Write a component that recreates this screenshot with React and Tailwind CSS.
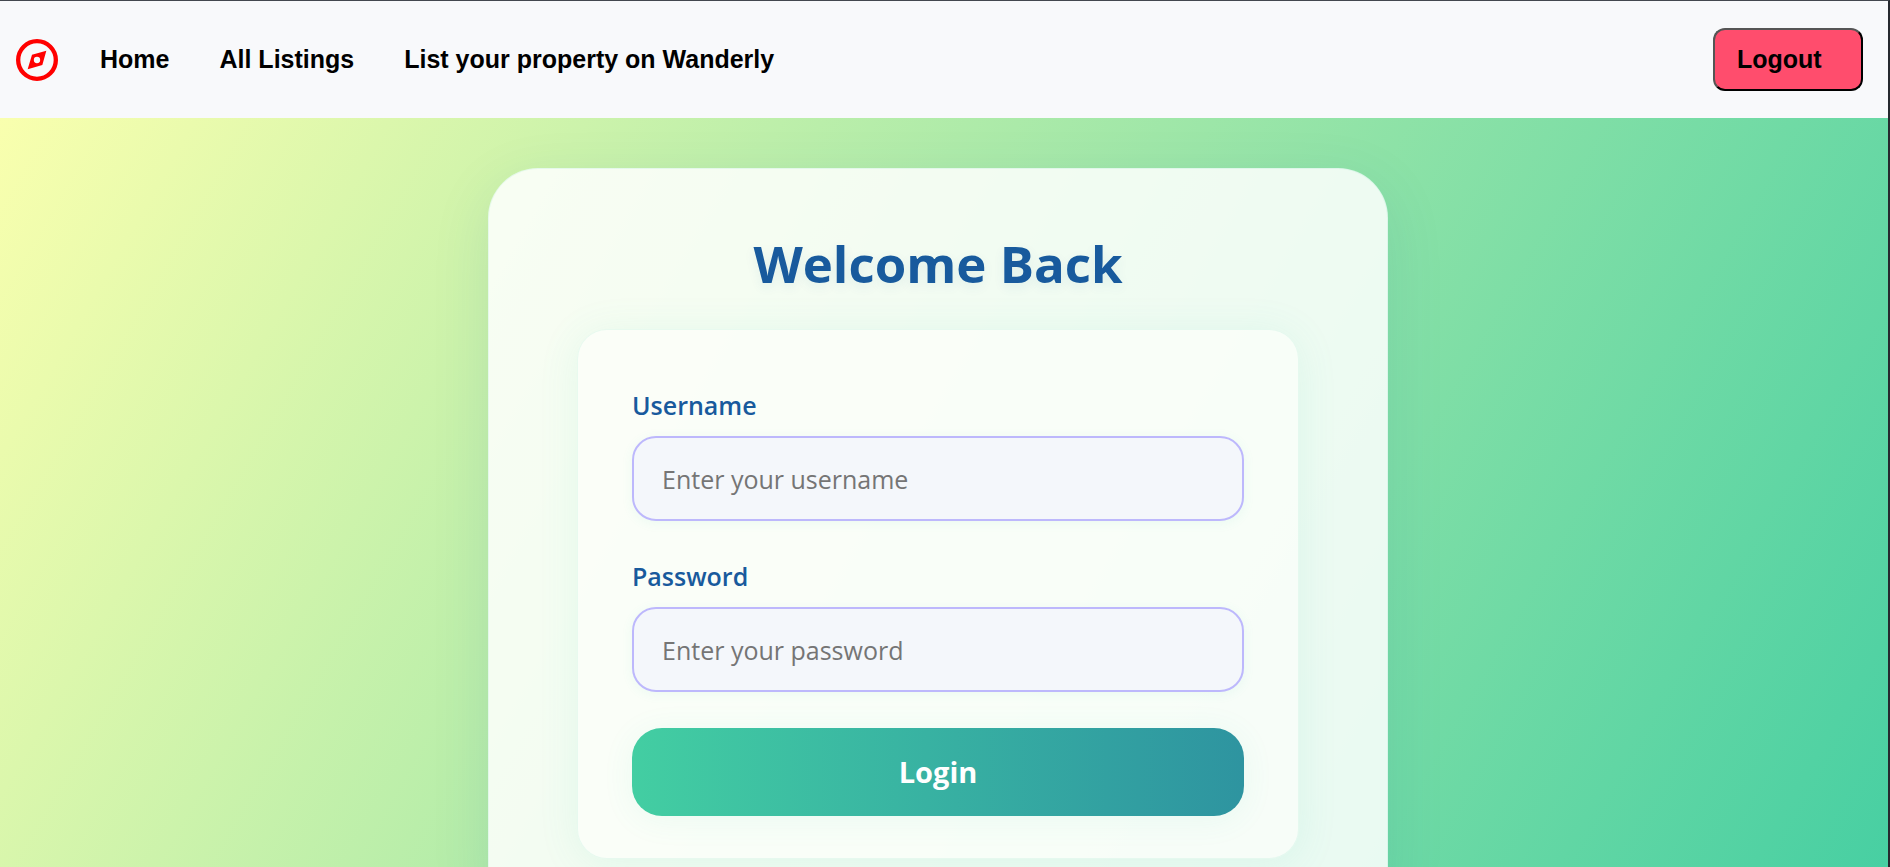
const links = ["Home", "All Listings", "List your property on Wanderly"];

function CompassIcon() {
  return (
    <svg viewBox="0 0 126 126" className="size-[42px]" aria-hidden="true">
      <circle cx="63" cy="63" r="56.5" fill="none" stroke="currentColor" strokeWidth="13" />
      <path
        fill="currentColor"
        fillRule="evenodd"
        d="M91 35 L79 78 L35 91 L48 47 Z M63 53.5 a9.5 9.5 0 1 0 0 19 a9.5 9.5 0 1 0 0 -19 Z"
      />
    </svg>
  );
}

function Field({ id, label, type, placeholder, autoComplete }) {
  return (
    <div className="flex flex-col gap-3">
      <label htmlFor={id} className="text-[25px] leading-[38px] font-semibold text-[#185a9d]">
        {label}
      </label>
      <input
        id={id}
        type={type}
        placeholder={placeholder}
        autoComplete={autoComplete}
        className="h-[85px] w-full rounded-3xl border-2 border-[#bdb8fc] bg-[#f4f7fb] px-7 text-[25px] text-gray-800 shadow-[0_2px_12px_rgba(67,206,162,0.08)] outline-none placeholder:text-[#757575]"
      />
    </div>
  );
}

export default function App() {
  return (
    <div className="flex min-h-screen flex-col border-t border-r-2 border-t-[#43474f] border-r-[#26292f]">
      <header className="flex h-[117px] shrink-0 items-center bg-[#f8f9fb] pr-[25px] pl-4 font-['Liberation_Sans',sans-serif] text-[25px] font-bold text-black">
        <a href="#" aria-label="Wanderly" className="mr-[42px] text-[#ff0000]">
          <CompassIcon />
        </a>
        <nav className="flex gap-[50px]">
          {links.map((link) => (
            <a key={link} href="#">
              {link}
            </a>
          ))}
        </nav>
        <button
          type="button"
          className="ml-auto h-[63px] w-[150px] rounded-xl border-2 border-t-[#555] border-r-black border-b-black border-l-[#555] bg-[#ff4d6d] pl-[22px] text-left"
        >
          Logout
        </button>
      </header>

      <main className="flex grow justify-center bg-[linear-gradient(120deg,#f9ffae_0%,#43cea2_100%)] pt-[50px] pr-3 pb-[50px] font-['Open_Sans','Noto_Sans',sans-serif]">
        <section className="w-full max-w-[900px] rounded-[50px] border border-[#43cea2]/10 bg-white/85 px-[88px] py-[60px] shadow-[0_16px_60px_rgba(24,90,157,0.1)]">
          <h1 className="text-center text-[51px] leading-[68px] font-bold text-[#185a9d] [text-shadow:0_4px_12px_rgba(24,90,157,0.08)]">
            Welcome Back
          </h1>
          <form className="mt-8 flex flex-col rounded-[30px] border border-[#43cea2]/10 bg-[#fdfffb]/65 px-[54px] pt-14 pb-[42px] shadow-[0_4px_40px_rgba(67,206,162,0.1)]">
            <div className="flex flex-col gap-9">
              <Field id="username" label="Username" type="text" placeholder="Enter your username" autoComplete="username" />
              <Field id="password" label="Password" type="password" placeholder="Enter your password" autoComplete="current-password" />
            </div>
            <button
              type="submit"
              className="mt-9 h-[88px] rounded-[30px] bg-linear-to-r from-[#43cea2] to-[#2e94a0] text-[29px] font-bold text-white shadow-[0_4px_32px_rgba(67,206,162,0.08)]"
            >
              Login
            </button>
          </form>
        </section>
      </main>
    </div>
  );
}
